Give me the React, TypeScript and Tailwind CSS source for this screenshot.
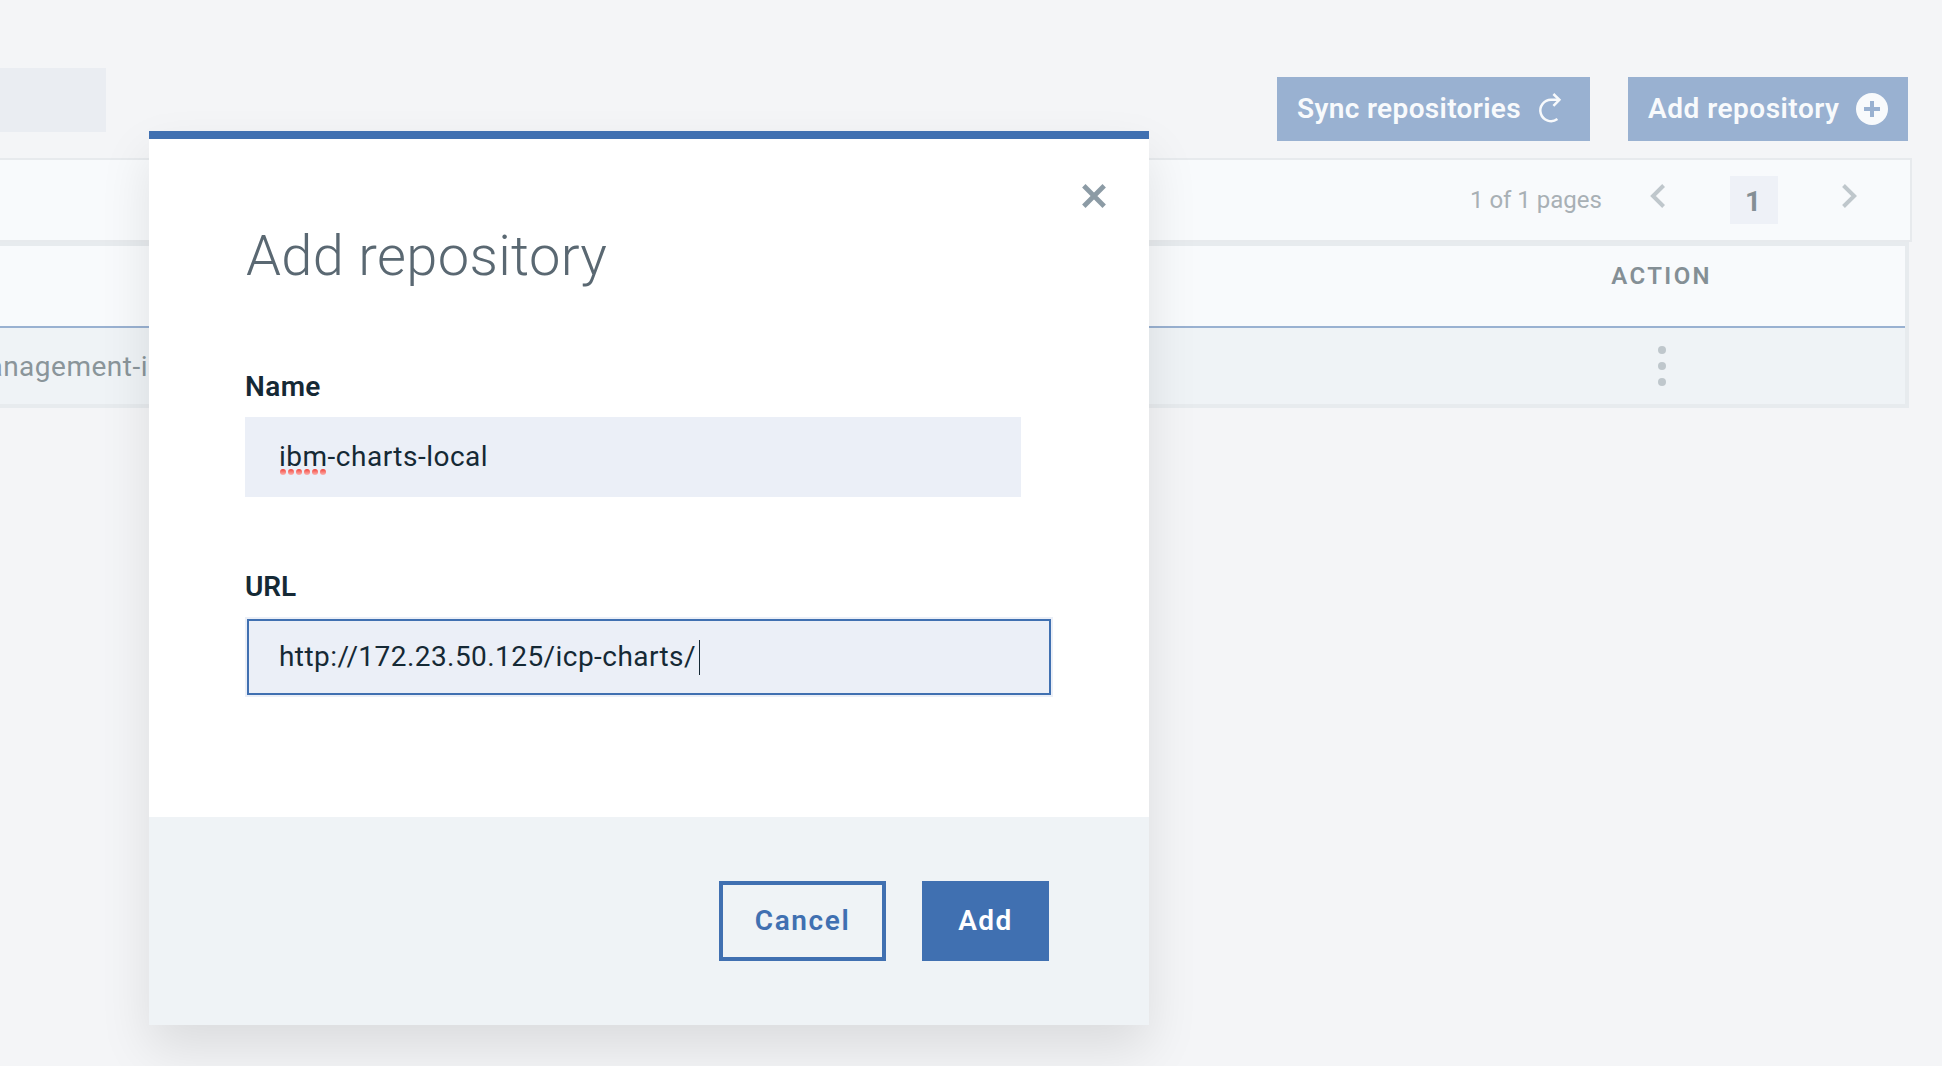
const dots = [0, 1, 2, 3, 4, 5];

function Toolbar() {
  return (
    <header className="flex h-[158px] items-start pt-[68px]">
      <div className="h-16 w-[106px] bg-[#eaedf2]" />
      <button className="mt-[9px] ml-auto flex h-16 w-[313px] items-center bg-[#99b1d1] pl-5 text-[28px] font-semibold tracking-[0.35px] text-[#f8fafc]">
        <span className="w-[234px] text-left whitespace-nowrap">Sync repositories</span>
        <svg width="32" height="32" viewBox="0 0 32 32" fill="none" stroke="currentColor" strokeWidth="2.5" className="ml-[6px]">
          <path d="M20.4 26.1A10.7 10.7 0 1 1 14.4 6.8H21.8" />
          <path d="M16.4 1L22.4 6.8L16.4 12.8" />
        </svg>
      </button>
      <button className="mt-[9px] mr-[34px] ml-[38px] flex h-16 w-[280px] items-center bg-[#99b1d1] pl-5 text-[28px] font-semibold tracking-[0.5px] text-[#f8fafc]">
        <span className="w-[208px] text-left whitespace-nowrap">Add repository</span>
        <svg width="32" height="32" viewBox="0 0 32 32">
          <circle cx="16" cy="16" r="16" fill="#f8fafc" />
          <path d="M8 16H24M16 8V24" stroke="#99b1d1" strokeWidth="4" />
        </svg>
      </button>
    </header>
  );
}

function Pagination() {
  return (
    <div className="flex h-[84px] w-[1912px] items-center justify-end border-y-2 border-r-2 border-[#e7eaed] bg-[#f8fafc] pr-[53px]">
      <span className="w-[134px] text-2xl tracking-[-0.02px] whitespace-nowrap text-[#a8b0b5]">1 of 1 pages</span>
      <svg width="16" height="24" viewBox="0 0 16 24" className="mr-[65px] mb-2 ml-[45px]" fill="none" stroke="#bfc7cc" strokeWidth="4">
        <path d="M14.6 1.5L4 12L14.6 22.5" />
      </svg>
      <span className="flex size-12 items-center justify-center bg-[#eef1f7] pt-[3px] pr-0.5 text-[28px] font-bold text-[#848f95]">1</span>
      <svg width="16" height="24" viewBox="0 0 16 24" className="mb-2 ml-[63px]" fill="none" stroke="#bfc7cc" strokeWidth="4">
        <path d="M2.5 1.5L13.2 12L2.5 22.5" />
      </svg>
    </div>
  );
}

function Table() {
  return (
    <div className="h-[166px] w-[1909px] border-y-4 border-r-4 border-[#e7ebee]">
      <div className="flex h-[82px] justify-end border-b-2 border-[#99b1d1] bg-[#f8fafc] pt-3.5 pr-[193px]">
        <span className="text-2xl leading-8 font-semibold tracking-[2.4px] text-[#848f95]">ACTION</span>
      </div>
      <div className="flex h-[76px] items-center bg-[#eff3f6] pr-[239px]">
        <span className="-ml-[154px] w-[302px] pt-0.5 text-right text-[28px] tracking-[0.5px] whitespace-nowrap text-[#8a959a]">management-i</span>
        <div className="ml-auto flex flex-col gap-2">
          <i className="size-2 rounded-full bg-[#bfc7cc]" />
          <i className="size-2 rounded-full bg-[#bfc7cc]" />
          <i className="size-2 rounded-full bg-[#bfc7cc]" />
        </div>
      </div>
    </div>
  );
}

function Dialog() {
  return (
    <section role="dialog" className="absolute top-[131px] left-[149px] flex h-[894px] w-[1000px] flex-col border-t-8 border-[#4070b1] bg-white shadow-[0_24px_48px_0_rgba(0,0,0,0.1)]">
      <div className="relative flex-1 pt-[85px] pl-24">
        <button aria-label="Close" className="absolute top-[45px] right-[43px]">
          <svg width="24" height="24" viewBox="0 0 24 24" stroke="#8c9ba5" strokeWidth="4.8">
            <path d="M1.8 1.8L22.2 22.2M22.2 1.8L1.8 22.2" />
          </svg>
        </button>
        <h1 className="pl-px text-[56px] leading-[64px] font-light tracking-[0.35px] text-[#5a6872]">Add repository</h1>

        <label className="mt-[83px] block h-[46px] text-[28px] leading-8 font-semibold tracking-[0.4px] text-[#152935]">Name</label>
        <div className="flex h-20 w-[776px] items-center bg-[#ebeff7] pl-[34px] text-[28px] text-[#152935]">
          <span className="relative tracking-[0.5px] whitespace-nowrap">
            ibm-charts-local
            <span className="absolute top-[33px] left-px flex gap-0.5">
              {dots.map((d) => (
                <i key={d} className="size-1.5 rounded-full bg-linear-to-b from-[#f23c38] to-[#f9b0b0]" />
              ))}
            </span>
          </span>
        </div>

        <label className="mt-[74px] block h-[46px] text-[28px] leading-8 font-semibold tracking-[-0.1px] text-[#152935]">URL</label>
        <div className="flex h-20 w-[808px] bg-[#ebeff7] p-0.5">
          <div className="flex flex-1 items-center border-2 border-[#4070b1] pl-[30px] text-[28px] text-[#152935]">
            <span className="w-[420px] tracking-[0.44px] whitespace-nowrap">http://172.23.50.125/icp-charts/</span>
            <span className="h-[35px] w-px bg-[#152935]" />
          </div>
        </div>
      </div>

      <footer className="flex h-52 items-start justify-end bg-[#eff3f6] pt-16 pr-[100px]">
        <button className="h-20 w-[167px] border-4 border-[#4070b1] text-[28px] font-semibold tracking-[1.6px] text-[#4070b1]">Cancel</button>
        <button className="ml-9 h-20 w-[127px] bg-[#4070b1] text-[28px] font-semibold tracking-[1.5px] text-white">Add</button>
      </footer>
    </section>
  );
}

export default function App() {
  return (
    <main className="relative h-[1066px] w-[1942px] overflow-hidden bg-[#f4f5f7] font-['Roboto',sans-serif]">
      <Toolbar />
      <Pagination />
      <Table />
      <Dialog />
    </main>
  );
}
